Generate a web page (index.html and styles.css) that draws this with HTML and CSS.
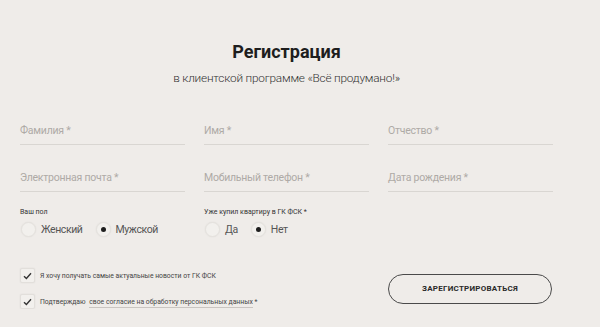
FILE: index.html
```html
<!DOCTYPE html>
<html lang="ru">
<head>
<meta charset="utf-8">
<link rel="stylesheet" href="styles.css">
</head>
<body>
<div class="page">
  <h1 class="title">Регистрация</h1>
  <p class="subtitle">в клиентской программе «Всё продумано!»</p>

  <div class="grid fields">
    <div class="field">Фамилия *</div>
    <div class="field">Имя *</div>
    <div class="field">Отчество *</div>
    <div class="field">Электронная почта *</div>
    <div class="field">Мобильный телефон *</div>
    <div class="field">Дата рождения *</div>
  </div>

  <div class="grid groups">
    <div class="group">
      <div class="caption">Ваш пол</div>
      <div class="radios">
        <span class="radio"><span class="circle"></span>Женский</span>
        <span class="radio"><span class="circle on"></span>Мужской</span>
      </div>
    </div>
    <div class="group">
      <div class="caption">Уже купил квартиру в ГК ФСК *</div>
      <div class="radios">
        <span class="radio"><span class="circle"></span>Да</span>
        <span class="radio"><span class="circle on"></span>Нет</span>
      </div>
    </div>
  </div>

  <div class="grid bottom">
    <div class="checks">
      <div class="check">
        <span class="box"><svg width="9" height="8" viewBox="0 0 9 8"><path d="M1 4.2 L3.4 6.5 L8 1.3" fill="none" stroke="#333" stroke-width="1.4"/></svg></span>
        <span>Я хочу получать самые актуальные новости от ГК ФСК</span>
      </div>
      <div class="check">
        <span class="box"><svg width="9" height="8" viewBox="0 0 9 8"><path d="M1 4.2 L3.4 6.5 L8 1.3" fill="none" stroke="#333" stroke-width="1.4"/></svg></span>
        <span>Подтверждаю <span class="link">свое согласие на обработку персональных данных</span> *</span>
      </div>
    </div>
    <button class="btn">ЗАРЕГИСТРИРОВАТЬСЯ</button>
  </div>
</div>
</body>
</html>
```

FILE: styles.css
```css
html, body {
  margin: 0;
  padding: 0;
  background: #efece9;
  font-family: Roboto, "Noto Sans", sans-serif;
}
.page {
  width: 533px;
  padding: 42px 0 0 20px;
}
.title {
  margin: 0;
  font-size: 18px;
  line-height: 20px;
  font-weight: 700;
  color: #1e1e1e;
  text-align: center;
}
.subtitle {
  margin: 8px 0 0;
  font-size: 11.8px;
  letter-spacing: -0.2px;
  line-height: 16px;
  font-weight: 300;
  color: #333;
  text-align: center;
}
.grid {
  display: grid;
  grid-template-columns: 165px 165px 165px;
  column-gap: 19px;
}
.fields {
  margin-top: 38px;
  row-gap: 26px;
}
.field {
  font-size: 10.5px;
  letter-spacing: -0.25px;
  line-height: 14px;
  color: #aeaaa6;
  padding-bottom: 6px;
  border-bottom: 1px solid #d9d6d2;
}
.groups {
  margin-top: 15px;
}
.caption {
  font-size: 7px;
  line-height: 10px;
  color: #333;
}
.radios {
  display: flex;
  gap: 13px;
  margin-top: 3px;
  padding-left: 1px;
  height: 18px;
  align-items: center;
}
.radio {
  display: flex;
  align-items: center;
  gap: 5px;
  font-size: 10.5px;
  letter-spacing: -0.4px;
  color: #555;
}
.circle {
  width: 13px;
  height: 13px;
  border-radius: 50%;
  background: #f2f0ed;
  border: 1px solid #e4e1dd;
  box-shadow: 0 0 2px rgba(0,0,0,0.06);
  display: flex;
  align-items: center;
  justify-content: center;
}
.circle.on::after {
  content: "";
  width: 5px;
  height: 5px;
  border-radius: 50%;
  background: #1e1e1e;
}
.bottom {
  margin-top: 30px;
  align-items: center;
}
.checks {
  grid-column: 1 / 3;
  display: flex;
  flex-direction: column;
  gap: 11px;
}
.check {
  display: flex;
  align-items: center;
  gap: 5px;
  font-size: 6.8px;
  line-height: 14px;
  color: #444;
}
.box {
  width: 13px;
  height: 13px;
  border: 1px solid #e2dfdb;
  background: #f2f0ed;
  box-shadow: 0 0 2px rgba(0,0,0,0.07);
  border-radius: 2px;
  display: flex;
  align-items: center;
  justify-content: center;
}
.link {
  margin-left: 2px;
  border-bottom: 1px solid #c9c5c1;
  padding-bottom: 1px;
}
.btn {
  grid-column: 3;
  width: 164px;
  height: 30px;
  border: 1.5px solid #4a4a4a;
  border-radius: 15px;
  background: transparent;
  font-family: Roboto, "Noto Sans", sans-serif;
  font-size: 8px;
  font-weight: 700;
  color: #2a2a2a;
  letter-spacing: 0.25px;
  padding: 0;
}
```
